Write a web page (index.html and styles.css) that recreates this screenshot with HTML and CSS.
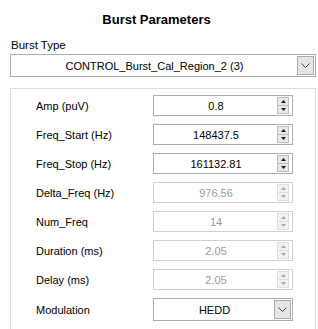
FILE: index.html
```html
<!DOCTYPE html>
<html lang="en">
<head>
    <meta charset="UTF-8">
    <title>Burst Parameters</title>
    <link rel="stylesheet" href="styles.css">
</head>
<body>
    <div class="panel">
        <h1 class="title">Burst Parameters</h1>

        <div class="field-label">Burst Type</div>
        <div class="combo combo-wide">
            <span class="combo-text">CONTROL_Burst_Cal_Region_2 (3)</span>
            <span class="combo-btn">
                <svg width="9" height="5" viewBox="0 0 9 5"><path d="M0.5 0.5 L4.5 4.5 L8.5 0.5" fill="none" stroke="#444" stroke-width="1"/></svg>
            </span>
        </div>

        <div class="group">
            <div class="row">
                <span class="row-label">Amp (puV)</span>
                <div class="spin">
                    <span class="spin-value">0.8</span>
                    <div class="spin-btns">
                        <span class="spin-up"><svg width="7" height="4" viewBox="0 0 7 4"><path d="M3.5 0 L7 4 L0 4 Z"/></svg></span>
                        <span class="spin-down"><svg width="7" height="4" viewBox="0 0 7 4"><path d="M0 0 L7 0 L3.5 4 Z"/></svg></span>
                    </div>
                </div>
            </div>
            <div class="row">
                <span class="row-label">Freq_Start (Hz)</span>
                <div class="spin">
                    <span class="spin-value">148437.5</span>
                    <div class="spin-btns">
                        <span class="spin-up"><svg width="7" height="4" viewBox="0 0 7 4"><path d="M3.5 0 L7 4 L0 4 Z"/></svg></span>
                        <span class="spin-down"><svg width="7" height="4" viewBox="0 0 7 4"><path d="M0 0 L7 0 L3.5 4 Z"/></svg></span>
                    </div>
                </div>
            </div>
            <div class="row">
                <span class="row-label">Freq_Stop (Hz)</span>
                <div class="spin">
                    <span class="spin-value">161132.81</span>
                    <div class="spin-btns">
                        <span class="spin-up"><svg width="7" height="4" viewBox="0 0 7 4"><path d="M3.5 0 L7 4 L0 4 Z"/></svg></span>
                        <span class="spin-down"><svg width="7" height="4" viewBox="0 0 7 4"><path d="M0 0 L7 0 L3.5 4 Z"/></svg></span>
                    </div>
                </div>
            </div>
            <div class="row">
                <span class="row-label">Delta_Freq (Hz)</span>
                <div class="spin disabled">
                    <span class="spin-value">976.56</span>
                    <div class="spin-btns">
                        <span class="spin-up"><svg width="7" height="4" viewBox="0 0 7 4"><path d="M3.5 0 L7 4 L0 4 Z"/></svg></span>
                        <span class="spin-down"><svg width="7" height="4" viewBox="0 0 7 4"><path d="M0 0 L7 0 L3.5 4 Z"/></svg></span>
                    </div>
                </div>
            </div>
            <div class="row">
                <span class="row-label">Num_Freq</span>
                <div class="spin disabled">
                    <span class="spin-value">14</span>
                    <div class="spin-btns">
                        <span class="spin-up"><svg width="7" height="4" viewBox="0 0 7 4"><path d="M3.5 0 L7 4 L0 4 Z"/></svg></span>
                        <span class="spin-down"><svg width="7" height="4" viewBox="0 0 7 4"><path d="M0 0 L7 0 L3.5 4 Z"/></svg></span>
                    </div>
                </div>
            </div>
            <div class="row">
                <span class="row-label">Duration (ms)</span>
                <div class="spin disabled">
                    <span class="spin-value">2.05</span>
                    <div class="spin-btns">
                        <span class="spin-up"><svg width="7" height="4" viewBox="0 0 7 4"><path d="M3.5 0 L7 4 L0 4 Z"/></svg></span>
                        <span class="spin-down"><svg width="7" height="4" viewBox="0 0 7 4"><path d="M0 0 L7 0 L3.5 4 Z"/></svg></span>
                    </div>
                </div>
            </div>
            <div class="row">
                <span class="row-label">Delay (ms)</span>
                <div class="spin disabled">
                    <span class="spin-value">2.05</span>
                    <div class="spin-btns">
                        <span class="spin-up"><svg width="7" height="4" viewBox="0 0 7 4"><path d="M3.5 0 L7 4 L0 4 Z"/></svg></span>
                        <span class="spin-down"><svg width="7" height="4" viewBox="0 0 7 4"><path d="M0 0 L7 0 L3.5 4 Z"/></svg></span>
                    </div>
                </div>
            </div>
            <div class="row row-combo">
                <span class="row-label">Modulation</span>
                <div class="combo combo-small">
                    <span class="combo-text">HEDD</span>
                    <span class="combo-btn">
                        <svg width="9" height="5" viewBox="0 0 9 5"><path d="M0.5 0.5 L4.5 4.5 L8.5 0.5" fill="none" stroke="#444" stroke-width="1"/></svg>
                    </span>
                </div>
            </div>
        </div>
    </div>
</body>
</html>
```

FILE: styles.css
```css
body {
    margin: 0;
    background-color: #fff;
    color: #000;
    font-family: "Liberation Sans", Arial, sans-serif;
    font-size: 11.5px;
    overflow: hidden;
}
.panel {
    width: 306px;
    height: 329px;
    padding-left: 10px;
    overflow: hidden;
}
.title {
    margin: 0;
    padding: 12px 13px 0 0;
    height: 22px;
    font-size: 13px;
    font-weight: bold;
    text-align: center;
}
.field-label {
    margin-top: 4px;
    padding-left: 1px;
    height: 15px;
    line-height: 15px;
}
.combo {
    display: flex;
    align-items: center;
    box-sizing: border-box;
    border: 1px solid #adadad;
    background-color: #fff;
    padding: 1px;
}
.combo-wide {
    width: 306px;
    height: 23px;
    margin-top: 1px;
}
.combo-small {
    width: 140px;
    height: 23px;
}
.combo-text {
    flex: 1;
    text-align: center;
    font-size: 11px;
}
.combo-btn {
    display: flex;
    align-items: center;
    justify-content: center;
    box-sizing: border-box;
    width: 17px;
    height: 19px;
    background-color: #e5e5e5;
    border: 1px solid #acacac;
}
.group {
    margin-top: 11px;
    width: 306px;
    height: 260px;
    box-sizing: border-box;
    border: 1px solid #dcdcdc;
    border-bottom: none;
    padding: 6px 0 0 25px;
}
.row {
    display: grid;
    grid-template-columns: 117px 140px;
    align-items: center;
    height: 21px;
    margin-bottom: 8px;
}
.row-label {
    font-size: 11px;
    padding-top: 1px;
}
.row-combo {
    margin-top: 3px;
    height: 23px;
}
.spin {
    display: flex;
    align-items: center;
    box-sizing: border-box;
    height: 21px;
    border: 1px solid #ababab;
    padding: 0 3px 0 1px;
}
.spin-value {
    flex: 1;
    text-align: center;
    font-size: 11px;
}
.spin-btns {
    display: flex;
    flex-direction: column;
    width: 12px;
    height: 17px;
    box-sizing: border-box;
    border: 1px solid #bcbcbc;
    background-color: #e8e8e8;
}
.spin-up, .spin-down {
    flex: 1;
    display: flex;
    align-items: center;
    justify-content: center;
}
.spin-up {
    border-bottom: 1px solid #bcbcbc;
}
.spin-btns svg {
    fill: #1a1a1a;
    width: 5px;
    height: 3px;
}
.disabled {
    border-color: #d0d0d0;
    color: #9a9a9a;
}
.disabled .spin-btns {
    border-color: #dedede;
    background-color: #f2f2f2;
}
.disabled .spin-up {
    border-bottom-color: #dedede;
}
.disabled .spin-btns svg {
    fill: #a8a8a8;
}
```
